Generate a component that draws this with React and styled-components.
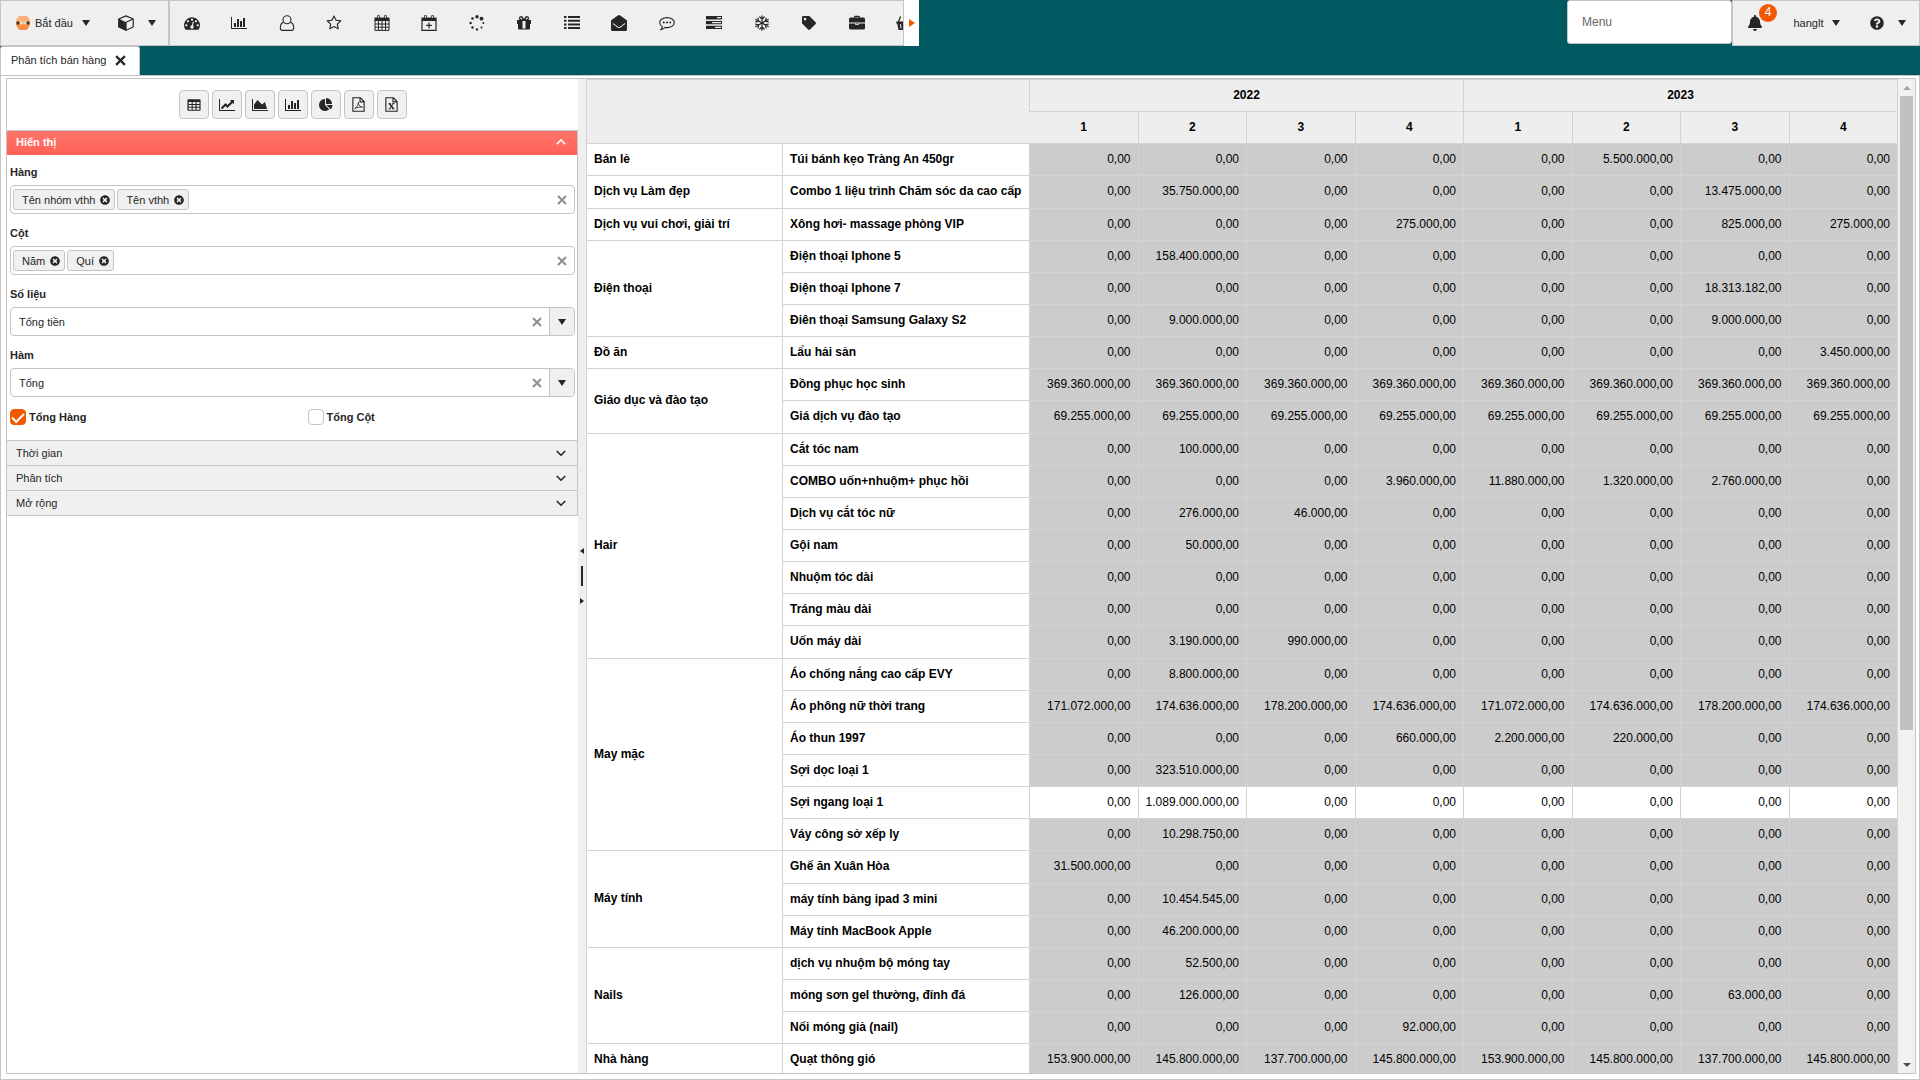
import React, { useState } from "react";
import styled, { createGlobalStyle, css } from "styled-components";
import {
  FaBell,
  FaEnvelopeOpen,
  FaQuestionCircle,
  FaTag,
  FaTimesCircle,
} from "react-icons/fa";

const GlobalStyle = createGlobalStyle`
  * {
    box-sizing: border-box;
  }
  body {
    margin: 0;
    overflow: hidden;
    background: #005961;
    color: #262626;
    font-family: "Liberation Sans", Arial, sans-serif;
    font-size: 11px;
  }
  button, input, select {
    font: inherit;
    color: inherit;
  }
  button {
    cursor: pointer;
  }
`;

// icons
const Icon = ({ size = 16, box = "0 0 16 16", width, children }) => (
  <svg
    width={width || size}
    height={size}
    viewBox={box}
    fill="currentColor"
    aria-hidden="true"
  >
    {children}
  </svg>
);

const Line = ({ children, ...rest }) => (
  <g fill="none" stroke="currentColor" strokeWidth="1.2" {...rest}>
    {children}
  </g>
);

const Caret = () => (
  <Icon size={8} box="0 0 8 8">
    <path d="M0 1h8L4 7z" />
  </Icon>
);

const Avatar = () => (
  <Icon box="0 0 16 16">
    <path fill="#f9b07c" d="M4 1h8l3 4v3H1V5z" />
    <path fill="#f79245" d="M1 8h14v2l-3 5H4l-3-5z" />
    <path fill="#e9c39a" d="M3 7h10v2H3z" />
    <circle fill="#e8e0c8" cx="6" cy="8" r="1.6" />
    <circle fill="#e8e0c8" cx="10.5" cy="8" r="1.6" />
    <circle fill="#4a3423" cx="3" cy="8" r="1.7" />
    <circle fill="#4a3423" cx="13" cy="8" r="1.7" />
  </Icon>
);

const Cube = () => (
  <Icon>
    <path d="M.6 3.6 8 7.2v8.6L.6 12z" />
    <Line strokeLinejoin="round">
      <path d="M8 .9 15.2 4v8L8 15.2.8 12V4zM8 7.2 15.2 4M8 7.2v8" />
    </Line>
  </Icon>
);

const Dashboard = () => (
  <Icon box="0 0 1792 1792">
    <path d="M384 1152q0-53-37.500-90.500t-90.500-37.500-90.500 37.500-37.500 90.500 37.500 90.500 90.500 37.500 90.500-37.500 37.500-90.500zm192-448q0-53-37.500-90.500t-90.500-37.500-90.500 37.500-37.500 90.500 37.500 90.500 90.500 37.500 90.500-37.500 37.500-90.500zm428 481l101-382q6-26-7.500-48.500t-38.500-29.500-48 6.500-30 39.500l-101 382q-60 5-107 43.500t-63 98.500q-20 77 20 146t117 89 146-20 89-117q16-60-6-117t-72-91zm660-33q0-53-37.500-90.500t-90.500-37.500-90.500 37.500-37.500 90.500 37.500 90.500 90.500 37.500 90.500-37.500 37.500-90.500zm-640-640q0-53-37.500-90.500t-90.500-37.500-90.500 37.500-37.500 90.500 37.500 90.500 90.500 37.500 90.500-37.500 37.500-90.500zm448 192q0-53-37.500-90.500t-90.500-37.500-90.500 37.500-37.500 90.500 37.500 90.500 90.500 37.500 90.500-37.500 37.500-90.500zm320 448q0 261-141 483-19 29-54 29h-1402q-35 0-54-29-141-221-141-483 0-182 71-348t191-286 286-191 348-71 348 71 286 191 191 286 71 348z" />
  </Icon>
);

const BarChart = () => (
  <Icon size={14} width={16} box="0 0 2048 1792">
    <path d="M640 896v512h-256v-512h256zm384-512v1024h-256v-1024h256zm1024 1152v128h-2048v-1536h128v1408h1920zm-640-896v768h-256v-768h256zm384-384v1152h-256v-1152h256z" />
  </Icon>
);

const LineChart = () => (
  <Icon size={14} width={16} box="0 0 2048 1792">
    <path d="M2048 1536v128h-2048v-1536h128v1408h1920zm-128-1248v435q0 21-19.500 29.500t-35.500-7.500l-121-121-633 633q-10 10-23 10t-23-10l-233-233-416 416-192-192 585-585q10-10 23-10t23 10l233 233 464-464-121-121q-16-16-7.500-35.500t29.500-19.500h435q14 0 23 9t9 23z" />
  </Icon>
);

const AreaChart = () => (
  <Icon size={14} width={16} box="0 0 2048 1792">
    <path d="M2048 1536v128h-2048v-1536h128v1408h1920zm-384-1024l256 896h-1664v-576l448-576 576 576z" />
  </Icon>
);

const PieChart = () => (
  <Icon size={14} box="0 0 1792 1792">
    <path d="M768 890l546 546q-106 108-247.500 168t-298.500 60q-209 0-385.500-103t-279.500-279.500-103-385.500 103-385.500 279.500-279.500 385.500-103v762zm187 6h773q0 157-60 298.500t-168 247.500zm709-128h-768v-768q209 0 385.500 103t279.500 279.500 103 385.500z" />
  </Icon>
);

const TableIcon = () => (
  <Icon size={14}>
    <path
      fillRule="evenodd"
      d="M1.500 1.500h13q1 0 1 1v11q0 1-1 1h-13q-1 0-1-1v-11q0-1 1-1zM2 4.500v2.300h3.300V4.500zm4.500 0v2.300h3.200V4.500zm4.500 0v2.300h3.200V4.500zM2 7.900v2.200h3.300V7.900zm4.500 0v2.200h3.200V7.900zm4.500 0v2.200h3.200V7.900zM2 11.200v2.100h3.300v-2.100zm4.500 0v2.100h3.200v-2.100zm4.500 0v2.100h3.200v-2.100z"
    />
  </Icon>
);

const FilePdf = () => (
  <Icon size={15}>
    <Line>
      <path d="M2 .8h8l4 4v10.400H2zM9.600.8v4.400H14" />
      <path d="M4 12.500c2-1 4-4.500 3.800-6.800 0 2.800 2 5 4.400 5.200-2.800-.4-5.500 0-8.200 1.600z" strokeWidth=".9" />
    </Line>
  </Icon>
);

const FileExcel = () => (
  <Icon size={15}>
    <Line>
      <path d="M2 .8h8l4 4v10.400H2zM9.600.8v4.400H14" />
      <path d="m5.800 7 4.200 5.600" strokeWidth="1.700" />
      <path d="M10 7 5.800 12.600M4.800 7h2.400M8.800 7h2.400M4.800 12.600h2.400M8.800 12.600h2.400" strokeWidth="1" />
    </Line>
  </Icon>
);

const Person = () => (
  <Icon>
    <Line strokeWidth="1.100">
      <circle cx="8" cy="4.700" r="4" />
      <path d="M4.600 7.300C2.300 8 1.300 10.500 1.300 13c0 1.400.9 2.400 2.200 2.400h9c1.300 0 2.200-1 2.200-2.400 0-2.500-1-5-3.300-5.700" />
    </Line>
  </Icon>
);

const Star = () => (
  <Icon box="0 0 1792 1792">
    <path d="M1201 1004l306-297-422-62-189-382-189 382-422 62 306 297-73 421 378-199 377 199zm527-357q0 22-26 48l-363 354 86 500q1 7 1 20 0 50-41 50-19 0-40-12l-449-236-449 236q-22 12-40 12-21 0-31.500-14.500t-10.500-35.500q0-6 2-20l86-500-364-354q-25-27-25-48 0-37 56-46l502-73 225-455q19-41 49-41t49 41l225 455 502 73q56 9 56 46z" />
  </Icon>
);

const Calendar = () => (
  <Icon>
    <path d="M.5 2.500h15V6H.5zM3.300.3h2.400v3.400H3.300zM10.300.3h2.400v3.400h-2.400z" />
    <Line strokeWidth="1">
      <path d="M1 5v10.400h14V5M4.500 6v9M8 6v9M11.500 6v9M1 9h14M1 12.200h14" />
    </Line>
    <path fill="#efefef" d="M4.100 1h.8v2h-.8zM11.100 1h.8v2h-.8z" />
  </Icon>
);

const CalendarPlus = () => (
  <Icon>
    <path d="M.5 2.500h15V6H.5zM3.300.3h2.400v3.400H3.300zM10.300.3h2.400v3.400h-2.400z" />
    <Line>
      <path d="M1 5v10.400h14V5M8 7.600v5.600M5.200 10.400h5.600" />
    </Line>
    <path fill="#efefef" d="M4.100 1h.8v2h-.8zM11.100 1h.8v2h-.8z" />
  </Icon>
);

const Spinner = () => (
  <Icon>
    <circle cx="8" cy="1.800" r="1.700" />
    <circle cx="12.500" cy="3.700" r="1.900" />
    <circle cx="14.400" cy="8" r="1" />
    <circle cx="12.500" cy="12.500" r="1" />
    <circle cx="8" cy="14.400" r="1.200" />
    <circle cx="3.500" cy="12.500" r="1.200" />
    <circle cx="1.600" cy="8" r="1.200" />
    <circle cx="3.500" cy="3.500" r="1.300" />
  </Icon>
);

const Gift = () => (
  <Icon>
    <path d="M1 5h5.500v4H1zM9.500 5H15v4H9.500zM2 9h4.500v5.500H3q-1 0-1-1zM9.500 9H14v4.500q0 1-1 1H9.500zM6.500 13.500h3v1h-3zM6.500 5h3v1h-3z" />
    <Line strokeWidth="1.300">
      <path d="M7.600 4.800C6.800 2.600 5.600 1.600 4.600 1.800c-1.600.3-1.400 2.900.4 3zM8.400 4.800c.8-2.200 2-3.200 3-3 1.600.3 1.400 2.900-.4 3z" />
    </Line>
  </Icon>
);

const List = () => (
  <Icon>
    <path d="M0 1h2.500v2H0zM4 1h12v2H4zM0 4.700h2.500v2H0zM4 4.700h12v2H4zM0 8.400h2.500v2H0zM4 8.400h12v2H4zM0 12h2.500v2H0zM4 12h12v2H4z" />
  </Icon>
);

const Comment = () => (
  <Icon>
    <Line strokeWidth="1.100">
      <path d="M8 2.600c4 0 7.300 2.200 7.300 5s-3.200 5-7.300 5c-.7 0-1.300 0-1.900-.2-1.200 1.200-2.600 2-4.200 2.200.9-.9 1.300-1.700 1.400-2.900C1.700 10.800.7 9.300.7 7.600c0-2.800 3.200-5 7.300-5z" />
    </Line>
    <circle cx="4.800" cy="7.500" r="1" />
    <circle cx="8" cy="7.500" r="1" />
    <circle cx="11.200" cy="7.500" r="1" />
  </Icon>
);

const Tasks = () => (
  <Icon>
    <path
      fillRule="evenodd"
      d="M0 1h16v3.400H0zM11 2.100h4v1.200h-4zM0 5.900h16v3.400H0zM6 7h9v1.200H6zM0 10.700h16v3.400H0zM9 11.800h6v1.200H9z"
    />
  </Icon>
);

const Snowflake = () => (
  <Icon>
    <Line strokeWidth="1.200" strokeLinecap="round">
      {[0, 60, 120, 180, 240, 300].map((turn) => (
        <path
          key={turn}
          transform={`rotate(${turn} 8 8)`}
          d="M8 8V.8M5.800 2l2.200 2.200L10.200 2"
        />
      ))}
    </Line>
  </Icon>
);

const Tag = () => <FaTag size={14} />;

const Briefcase = () => (
  <Icon>
    <path
      fillRule="evenodd"
      d="M5 2.500Q5 .8 6.300.8h3.400q1.300 0 1.300 1.700H14.500q1.500 0 1.500 1.500v3.500H0V4q0-1.500 1.500-1.500zM6.200 2h3.600v.6H6.200z"
    />
    <path d="M0 8.500h6.300V10h3.400V8.500H16V13q0 1.500-1.500 1.500h-13Q0 14.500 0 13zM7.300 8.200h1.400v1H7.300z" />
  </Icon>
);

const Basket = () => (
  <Icon>
    <path
      fillRule="evenodd"
      d="M.3 6.500h15.400v2h-.9L13.500 15h-11L1.200 8.500H.3zM4 9l.5 4.500h1L5 9zm3.500 0v4.500h1V9zM11 9l-.5 4.500h1L12 9z"
    />
    <Line strokeWidth="1.300">
      <path d="m2.500 7 2-5.500M13.500 7l-2-5.500" />
    </Line>
  </Icon>
);

const Cross = ({ size = 10, weight = 2 }) => (
  <Icon size={size} box="0 0 10 10">
    <Line strokeWidth={weight}>
      <path d="M1 1l8 8M9 1l-8 8" />
    </Line>
  </Icon>
);

const Chevron = ({ up }) => (
  <Icon size={10} box="0 0 10 10">
    <Line strokeWidth="1.600">
      <path d={up ? "M.8 7.200 5 3l4.200 4.200" : "M.8 3 5 7.200 9.200 3"} />
    </Line>
  </Icon>
);

// data
const tools = [
  ["Bảng điều khiển", Dashboard],
  ["Biểu đồ", BarChart],
  ["Khách hàng", Person],
  ["Đánh dấu", Star],
  ["Lịch", Calendar],
  ["Thêm lịch", CalendarPlus],
  ["Tiến trình", Spinner],
  ["Quà tặng", Gift],
  ["Danh sách", List],
  ["Thư", FaEnvelopeOpen],
  ["Tin nhắn", Comment],
  ["Công việc", Tasks],
  ["Mùa", Snowflake],
  ["Nhãn", Tag],
  ["Hồ sơ", Briefcase],
  ["Giỏ hàng", Basket],
];

const views = [
  ["Bảng", TableIcon],
  ["Đường", LineChart],
  ["Vùng", AreaChart],
  ["Cột", BarChart],
  ["Tròn", PieChart],
  ["PDF", FilePdf],
  ["Excel", FileExcel],
];

const Z = "0,00";
const zeros = [Z, Z, Z, Z, Z, Z, Z, Z];
const same = (value) => Array(8).fill(value);
const at = (values) => zeros.map((zero, i) => values[i + 1] || zero);
const twice = (values) => [...values, ...values];

const groups = [
  ["Bán lẻ", [["Túi bánh kẹo Tràng An 450gr", at({ 6: "5.500.000,00" })]]],
  [
    "Dịch vụ Làm đẹp",
    [
      [
        "Combo 1 liệu trình Chăm sóc da cao cấp",
        at({ 2: "35.750.000,00", 7: "13.475.000,00" }),
      ],
    ],
  ],
  [
    "Dịch vụ vui chơi, giải trí",
    [
      [
        "Xông hơi- massage phòng VIP",
        at({ 4: "275.000,00", 7: "825.000,00", 8: "275.000,00" }),
      ],
    ],
  ],
  [
    "Điện thoại",
    [
      ["Điện thoại Iphone 5", at({ 2: "158.400.000,00" })],
      ["Điện thoại Iphone 7", at({ 7: "18.313.182,00" })],
      [
        "Điên thoại Samsung Galaxy S2",
        at({ 2: "9.000.000,00", 7: "9.000.000,00" }),
      ],
    ],
  ],
  ["Đồ ăn", [["Lẩu hải sản", at({ 8: "3.450.000,00" })]]],
  [
    "Giáo dục và đào tạo",
    [
      ["Đồng phục học sinh", same("369.360.000,00")],
      ["Giá dịch vụ đào tạo", same("69.255.000,00")],
    ],
  ],
  [
    "Hair",
    [
      ["Cắt tóc nam", at({ 2: "100.000,00" })],
      [
        "COMBO uốn+nhuộm+ phục hồi",
        at({
          4: "3.960.000,00",
          5: "11.880.000,00",
          6: "1.320.000,00",
          7: "2.760.000,00",
        }),
      ],
      ["Dịch vụ cắt tóc nữ", at({ 2: "276.000,00", 3: "46.000,00" })],
      ["Gội nam", at({ 2: "50.000,00" })],
      ["Nhuộm tóc dài", zeros],
      ["Tráng màu dài", zeros],
      ["Uốn máy dài", at({ 2: "3.190.000,00", 3: "990.000,00" })],
    ],
  ],
  [
    "May mặc",
    [
      ["Áo chống nắng cao cấp EVY", at({ 2: "8.800.000,00" })],
      [
        "Áo phông nữ thời trang",
        twice([
          "171.072.000,00",
          "174.636.000,00",
          "178.200.000,00",
          "174.636.000,00",
        ]),
      ],
      [
        "Áo thun 1997",
        at({ 4: "660.000,00", 5: "2.200.000,00", 6: "220.000,00" }),
      ],
      ["Sợi dọc loại 1", at({ 2: "323.510.000,00" })],
      ["Sợi ngang loại 1", at({ 2: "1.089.000.000,00" })],
      ["Váy công sở xếp ly", at({ 2: "10.298.750,00" })],
    ],
  ],
  [
    "Máy tính",
    [
      ["Ghế ăn Xuân Hòa", at({ 1: "31.500.000,00" })],
      ["máy tính bảng ipad 3 mini", at({ 2: "10.454.545,00" })],
      ["Máy tính MacBook Apple", at({ 2: "46.200.000,00" })],
    ],
  ],
  [
    "Nails",
    [
      ["dịch vụ nhuộm bộ móng tay", at({ 2: "52.500,00" })],
      [
        "móng sơn gel thường, đính đá",
        at({ 2: "126.000,00", 7: "63.000,00" }),
      ],
      ["Nối móng giả (nail)", at({ 4: "92.000,00" })],
    ],
  ],
  [
    "Nhà hàng",
    [
      [
        "Quạt thông gió",
        twice([
          "153.900.000,00",
          "145.800.000,00",
          "137.700.000,00",
          "145.800.000,00",
        ]),
      ],
    ],
  ],
];

const activeRow = "Sợi ngang loại 1";

function MultiField({ id, label, items }) {
  const [chips, setChips] = useState(items);
  return (
    <Field>
      <FieldLabel as="span" id={id}>
        {label}
      </FieldLabel>
      <FieldBox role="group" aria-labelledby={id}>
        <Chips>
          {chips.map((chip) => (
            <Chip key={chip}>
              {chip}
              <PlainButton
                aria-label={`Xóa ${chip}`}
                onClick={() => setChips(chips.filter((c) => c !== chip))}
              >
                <FaTimesCircle size={10} />
              </PlainButton>
            </Chip>
          ))}
        </Chips>
        <ClearButton aria-label="Xóa hết" onClick={() => setChips([])}>
          <Cross />
        </ClearButton>
      </FieldBox>
    </Field>
  );
}

function SelectField({ id, label, value }) {
  return (
    <Field>
      <FieldLabel htmlFor={id}>{label}</FieldLabel>
      <FieldBox>
        <Select id={id} defaultValue={value}>
          <option>{value}</option>
        </Select>
        <ClearButton aria-label="Xóa">
          <Cross />
        </ClearButton>
        <SelectArrow>
          <Caret />
        </SelectArrow>
      </FieldBox>
    </Field>
  );
}

function PivotTable() {
  return (
    <Pivot>
      <colgroup>
        <GroupCol />
        <ItemCol />
        <col span={8} />
      </colgroup>
      <thead>
        <tr>
          <HeadCell as="td" colSpan={2} rowSpan={2} $noRight />
          <HeadCell colSpan={4}>2022</HeadCell>
          <HeadCell colSpan={4}>2023</HeadCell>
        </tr>
        <tr>
          {[1, 2, 3, 4, 1, 2, 3, 4].map((quarter, i) => (
            <HeadCell key={i} $noLeft={i === 0}>
              {quarter}
            </HeadCell>
          ))}
        </tr>
      </thead>
      <tbody>
        {groups.map(([group, items]) =>
          items.map(([name, values], i) => (
            <Row key={name} $active={name === activeRow}>
              {i === 0 && (
                <NameCell scope="rowgroup" rowSpan={items.length}>
                  {group}
                </NameCell>
              )}
              <NameCell scope="row">{name}</NameCell>
              {values.map((value, n) => (
                <ValueCell key={n}>{value}</ValueCell>
              ))}
            </Row>
          ))
        )}
      </tbody>
    </Pivot>
  );
}

function App() {
  return (
    <Page>
      <GlobalStyle />
      <TopBar>
        <StartBar>
          <BarButton>
            <Avatar />
            Bắt đầu
            <CaretGap />
            <Caret />
          </BarButton>
          <BarButton aria-label="Kho">
            <Cube />
            <CaretGap $wide />
            <Caret />
          </BarButton>
        </StartBar>
        <ToolBar>
          <ToolStrip>
            {tools.map(([label, Glyph]) => (
              <ToolButton key={label} aria-label={label}>
                <Glyph size={16} />
              </ToolButton>
            ))}
          </ToolStrip>
        </ToolBar>
        <ScrollButton aria-label="Cuộn phải">
          <Icon size={8} box="0 0 8 8">
            <path d="M1 0v8l6-4z" />
          </Icon>
        </ScrollButton>
        <Spacer />
        <MenuInput placeholder="Menu" aria-label="Menu" />
        <UserBar>
          <BellButton aria-label="Thông báo">
            <FaBell size={16} />
            <Badge>4</Badge>
          </BellButton>
          <BarButton>
            hanglt
            <CaretGap />
            <Caret />
          </BarButton>
          <BarButton aria-label="Trợ giúp">
            <FaQuestionCircle size={14} />
            <CaretGap $wide />
            <Caret />
          </BarButton>
        </UserBar>
      </TopBar>

      <TabRow>
        <Tab>
          Phân tích bán hàng
          <PlainButton aria-label="Đóng">
            <Cross size={11} weight={2} />
          </PlainButton>
        </Tab>
      </TabRow>

      <Content>
        <Workspace>
          <Side>
            <ViewBar>
              {views.map(([label, Glyph]) => (
                <ViewButton key={label} aria-label={label}>
                  <Glyph />
                </ViewButton>
              ))}
            </ViewBar>
            <Accordion>
              <SectionHead $open aria-expanded="true">
                Hiển thị
                <Chevron up />
              </SectionHead>
              <SectionBody>
                <MultiField
                  id="rows"
                  label="Hàng"
                  items={["Tên nhóm vthh", "Tên vthh"]}
                />
                <MultiField id="cols" label="Cột" items={["Năm", "Quí"]} />
                <SelectField id="measure" label="Số liệu" value="Tổng tiền" />
                <SelectField id="func" label="Hàm" value="Tổng" />
                <Checks>
                  <CheckLabel>
                    <CheckBox type="checkbox" defaultChecked />
                    Tổng Hàng
                  </CheckLabel>
                  <CheckLabel>
                    <CheckBox type="checkbox" />
                    Tổng Cột
                  </CheckLabel>
                </Checks>
              </SectionBody>
              {["Thời gian", "Phân tích", "Mở rộng"].map((title) => (
                <SectionHead key={title} aria-expanded="false">
                  {title}
                  <Chevron />
                </SectionHead>
              ))}
            </Accordion>
          </Side>

          <Splitter>
            <Icon size={6} box="0 0 6 6">
              <path d="M5 0v6L1 3z" />
            </Icon>
            <SplitterBar />
            <Icon size={6} box="0 0 6 6">
              <path d="M1 0v6l4-3z" />
            </Icon>
          </Splitter>

          <TableArea>
            <PivotTable />
          </TableArea>

          <ScrollTrack aria-hidden="true">
            <ScrollEnd $muted>
              <Icon size={8} box="0 0 8 8">
                <path d="M0 6h8L4 2z" />
              </Icon>
            </ScrollEnd>
            <ScrollRail>
              <ScrollThumb />
            </ScrollRail>
            <ScrollEnd>
              <Icon size={8} box="0 0 8 8">
                <path d="M0 2h8L4 6z" />
              </Icon>
            </ScrollEnd>
          </ScrollTrack>
        </Workspace>
      </Content>
    </Page>
  );
}

export default App;

// page
const Page = styled.div`
  display: flex;
  flex-direction: column;
  height: 100vh;
`;

const TopBar = styled.header`
  display: flex;
  height: 46px;
  flex: none;
`;

const barSurface = css`
  display: flex;
  align-items: stretch;
  background: #efefef;
  border: 1px solid #c5c5c5;
`;

const StartBar = styled.div`
  ${barSurface}
  width: 169px;
  padding-left: 14px;
  gap: 28px;
`;

const ToolBar = styled.nav`
  ${barSurface}
  width: 735px;
  overflow: hidden;
`;

const ToolStrip = styled.div`
  display: flex;
  flex: none;
  width: 760px;
  margin-left: -2px;
`;

const PlainButton = styled.button`
  display: flex;
  align-items: center;
  justify-content: center;
  padding: 0;
  border: none;
  background: transparent;
`;

const ToolButton = styled(PlainButton)`
  flex: 1;
`;

const BarButton = styled(PlainButton)`
  gap: 4px;
`;

const CaretGap = styled.span`
  width: ${({ $wide }) => ($wide ? "6px" : "1px")};
`;

const ScrollButton = styled(PlainButton)`
  width: 15px;
  background: #fff;
  color: #f35800;
`;

const Spacer = styled.div`
  flex: 1;
`;

const MenuInput = styled.input`
  width: 165px;
  height: 44px;
  padding: 0 14px;
  border: 1px solid #c5c5c5;
  border-radius: 3px;
  background: #fff;
  font-size: 12px;
  &::placeholder {
    color: #666;
  }
`;

const UserBar = styled.div`
  ${barSurface}
  width: 188px;
  padding: 0 13px;
  justify-content: space-between;
`;

const BellButton = styled(PlainButton)`
  position: relative;
  width: 18px;
`;

const Badge = styled.span`
  position: absolute;
  top: 3px;
  left: 13px;
  width: 18px;
  height: 18px;
  border-radius: 50%;
  background: #f35800;
  color: #fff;
  font-size: 12px;
  line-height: 17px;
  text-align: center;
`;

const TabRow = styled.div`
  display: flex;
  height: 29px;
  flex: none;
`;

const Tab = styled.div`
  display: flex;
  align-items: center;
  gap: 9px;
  padding: 0 13px 2px 10px;
  border: 1px solid #c5c5c5;
  border-bottom: none;
  border-radius: 3px 3px 0 0;
  background: #fff;
`;

const Content = styled.main`
  display: flex;
  flex: 1;
  min-height: 0;
  padding: 2px 3px 5px 5px;
  border: 1px solid #c5c5c5;
  background: #fff;
`;

const Workspace = styled.div`
  display: flex;
  flex: 1;
  min-width: 0;
  border: 1px solid #c5c5c5;
`;

// left panel
const Side = styled.aside`
  width: 571px;
  flex: none;
`;

const ViewBar = styled.div`
  display: flex;
  justify-content: center;
  gap: 3px;
  padding: 11px 0;
`;

const ViewButton = styled(PlainButton)`
  width: 30px;
  height: 29px;
  border: 1px solid #c5c5c5;
  border-radius: 4px;
  background: #f0f0f0;
`;

const Accordion = styled.div`
  border: 1px solid #c5c5c5;
  border-left: none;
`;

const SectionHead = styled(PlainButton)`
  width: 100%;
  height: 25px;
  justify-content: space-between;
  padding: 0 11px 0 9px;
  border-top: 1px solid #c5c5c5;
  background: #f0f0f0;
  ${({ $open }) =>
    $open &&
    css`
      height: 24px;
      padding-bottom: 2px;
      border-top: none;
      background: linear-gradient(#ff766c, #ff6156);
      color: #fff;
      font-weight: bold;
    `}
`;

const SectionBody = styled.div`
  padding: 0 2px 15px 3px;
`;

const Field = styled.div`
  padding: 7px 0 2px;
`;

const FieldLabel = styled.label`
  display: block;
  height: 23px;
  font-weight: bold;
  line-height: 20px;
`;

const FieldBox = styled.div`
  display: flex;
  align-items: stretch;
  height: 29px;
  overflow: hidden;
  border: 1px solid #c5c5c5;
  border-radius: 4px;
`;

const Chips = styled.div`
  display: flex;
  flex: 1;
  align-items: center;
  gap: 2px;
  padding-left: 2px;
`;

const Chip = styled.span`
  display: flex;
  align-items: center;
  gap: 5px;
  height: 21px;
  padding: 0 4px 0 8px;
  border: 1px solid #c5c5c5;
  border-radius: 3px;
  background: #f0f0f0;
`;

const ClearButton = styled(PlainButton)`
  width: 24px;
  color: #8f8f8f;
`;

const Select = styled.select`
  flex: 1;
  appearance: none;
  padding: 0 8px;
  border: none;
  background: transparent;
`;

const SelectArrow = styled.span`
  display: flex;
  align-items: center;
  justify-content: center;
  width: 25px;
  border-left: 1px solid #c5c5c5;
  background: #f0f0f0;
  pointer-events: none;
`;

const Checks = styled.div`
  display: grid;
  grid-template-columns: 1fr 1fr;
  gap: 30px;
  padding-top: 10px;
`;

const CheckLabel = styled.label`
  display: flex;
  align-items: center;
  gap: 3px;
  font-weight: bold;
`;

const CheckBox = styled.input`
  appearance: none;
  width: 16px;
  height: 16px;
  margin: 0;
  border: 1px solid #c5c5c5;
  border-radius: 4px;
  background: #fff;
  display: grid;
  place-items: center;
  &:checked {
    border-color: #f35800;
    background: #f35800;
  }
  &:checked::after {
    content: "";
    width: 10px;
    height: 5px;
    border: solid #fff;
    border-width: 0 0 2px 2px;
    transform: translateY(-1px) rotate(-45deg);
  }
`;

const Splitter = styled.div`
  display: flex;
  flex-direction: column;
  align-items: center;
  justify-content: center;
  gap: 12px;
  width: 8px;
  flex: none;
  background: #efefef;
`;

const SplitterBar = styled.span`
  width: 2px;
  height: 20px;
  background: #262626;
`;

// table
const TableArea = styled.div`
  flex: 1;
  min-width: 0;
  overflow: hidden;
`;

const Pivot = styled.table`
  width: 100%;
  table-layout: fixed;
  border-collapse: collapse;
  color: #000;
  font-size: 12px;
  line-height: 16px;
`;

const GroupCol = styled.col`
  width: 196px;
`;

const ItemCol = styled.col`
  width: 247px;
`;

const cell = css`
  height: 32px;
  padding: 0 7px 2px;
  border: 1px solid #d3d3d3;
  white-space: nowrap;
`;

const HeadCell = styled.th`
  ${cell}
  background: #eee;
  ${({ $noLeft }) => $noLeft && "border-left: none;"}
  ${({ $noRight }) => $noRight && "border-right: none;"}
`;

const NameCell = styled.th`
  ${cell}
  background: #fff;
  text-align: left;
`;

const ValueCell = styled.td`
  ${cell}
  text-align: right;
`;

const Row = styled.tr`
  background: ${({ $active }) => ($active ? "#fff" : "#ccc")};
  &:nth-child(7n + 2) ${ValueCell} {
    height: 33px;
  }
`;

const ScrollTrack = styled.div`
  display: flex;
  flex-direction: column;
  width: 17px;
  flex: none;
  background: #f1f1f1;
`;

const ScrollEnd = styled.span`
  display: flex;
  align-items: center;
  justify-content: center;
  height: 17px;
  color: ${({ $muted }) => ($muted ? "#a3a3a3" : "#505050")};
`;

const ScrollRail = styled.div`
  flex: 1;
  padding: 0 2px;
`;

const ScrollThumb = styled.div`
  height: 66%;
  background: #c1c1c1;
`;
